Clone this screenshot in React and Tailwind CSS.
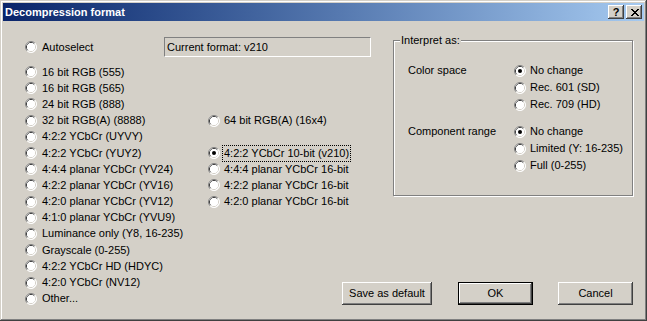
const RadioDot = ({ checked }) => (
  <svg width="12" height="12" viewBox="0 0 12 12" className="shrink-0">
    <circle cx="6" cy="6" r="5.5" fill="#ffffff" />
    <path d="M2.11 9.89 A5.5 5.5 0 0 1 9.89 2.11" stroke="#808080" fill="none" />
    <path d="M9.89 2.11 A5.5 5.5 0 0 1 2.11 9.89" stroke="#ffffff" fill="none" />
    <path d="M2.82 9.18 A4.5 4.5 0 0 1 9.18 2.82" stroke="#404040" fill="none" />
    <path d="M9.18 2.82 A4.5 4.5 0 0 1 2.82 9.18" stroke="#d4d0c8" fill="none" />
    <circle cx="6" cy="6" r="4" fill="#ffffff" />
    {checked && <circle cx="6" cy="6" r="2" fill="#000000" />}
  </svg>
);

const Radio = ({ label, checked, focused, className = "h-[16.2px]", gap = "mr-[5px]" }) => (
  <div className={`flex items-center whitespace-nowrap ${className}`}>
    <span className={gap}>
      <RadioDot checked={checked} />
    </span>
    <span
      className={
        focused ? "leading-[13px] outline outline-1 outline-dotted outline-black outline-offset-1" : "leading-[13px]"
      }
    >
      {label}
    </span>
  </div>
);

const raised =
  "shadow-[inset_-1px_-1px_#404040,inset_1px_1px_#ffffff,inset_-2px_-2px_#808080,inset_2px_2px_#d4d0c8]";

const leftFormats = [
  "16 bit RGB (555)",
  "16 bit RGB (565)",
  "24 bit RGB (888)",
  "32 bit RGB(A) (8888)",
  "4:2:2 YCbCr (UYVY)",
  "4:2:2 YCbCr (YUY2)",
  "4:4:4 planar YCbCr (YV24)",
  "4:2:2 planar YCbCr (YV16)",
  "4:2:0 planar YCbCr (YV12)",
  "4:1:0 planar YCbCr (YVU9)",
  "Luminance only (Y8, 16-235)",
  "Grayscale (0-255)",
  "4:2:2 YCbCr HD (HDYC)",
  "4:2:0 YCbCr (NV12)",
  "Other...",
];

const deepFormats = ["4:4:4 planar YCbCr 16-bit", "4:2:2 planar YCbCr 16-bit", "4:2:0 planar YCbCr 16-bit"];

const CloseGlyph = () => (
  <svg width="8" height="7" viewBox="0 0 8 7" shapeRendering="crispEdges">
    <path
      d="M0 0h2v1h-2zM6 0h2v1h-2zM1 1h2v1h-2zM5 1h2v1h-2zM2 2h4v1h-4zM3 3h2v1h-2zM2 4h4v1h-4zM1 5h2v1h-2zM5 5h2v1h-2zM0 6h2v1h-2zM6 6h2v1h-2z"
      fill="#000000"
    />
  </svg>
);

const App = () => {
  return (
    <div
      className={`h-[321px] w-[647px] bg-[#d4d0c8] p-[3px] font-['Liberation_Sans',Arial,sans-serif] text-[11px] text-black shadow-[inset_-1px_-1px_#404040,inset_1px_1px_#d4d0c8,inset_-2px_-2px_#808080,inset_2px_2px_#ffffff]`}
    >
      {/* title bar */}
      <div className="flex h-[18px] items-center bg-gradient-to-r from-[#0a246a] to-[#a6caf0] pl-[2px] pr-[2px]">
        <span className="font-bold leading-[13px] text-white">Decompression format</span>
        <div className="ml-auto flex gap-[2px]">
          <div className={`flex h-[14px] w-[16px] items-center justify-center bg-[#d4d0c8] ${raised}`}>
            <span className="text-[11px] font-bold leading-[11px]">?</span>
          </div>
          <div className={`flex h-[14px] w-[16px] items-center justify-center bg-[#d4d0c8] pl-[1px] ${raised}`}>
            <CloseGlyph />
          </div>
        </div>
      </div>

      {/* body */}
      <div className="grid h-[297px] grid-cols-[183px_185px_240px] grid-rows-[auto_auto_1fr] pl-[22px] pt-[16px]">
        <div className="col-span-2 col-start-1 row-start-1 mb-[7px] flex items-center">
          <div className="w-[139px]">
            <Radio label="Autoselect" className="h-[16px]" />
          </div>
          <div className="flex h-[20px] w-[207px] items-center border border-t-[#808080] border-l-[#808080] border-b-white border-r-white pl-[2px] leading-[13px]">
            Current format: v210
          </div>
        </div>

        <div className="col-start-1 row-span-2 row-start-2 flex flex-col">
          {leftFormats.map((f) => (
            <Radio key={f} label={f} />
          ))}
        </div>

        <div className="col-start-2 row-start-2 flex flex-col pt-[48.6px]">
          <Radio label="64 bit RGB(A) (16x4)" gap="mr-[4px]" />
          <div className="h-[16.2px]" />
          <Radio label="4:2:2 YCbCr 10-bit (v210)" checked focused gap="mr-[4px]" />
          {deepFormats.map((f) => (
            <Radio key={f} label={f} gap="mr-[4px]" />
          ))}
        </div>

        <div className="relative col-start-3 row-span-2 row-start-1 mt-[3px] h-[156px] self-start border border-[#808080] pl-[14px] pt-[21px] shadow-[inset_1px_1px_#ffffff,1px_1px_#ffffff]">
          <span className="absolute left-[6px] top-[-7px] bg-[#d4d0c8] px-[1px] leading-[13px]">Interpret as:</span>
          <div className="flex">
            <div className="flex h-[17px] w-[106px] items-center leading-[13px]">Color space</div>
            <div className="flex flex-col">
              <Radio label="No change" checked className="h-[17px]" gap="mr-[4px]" />
              <Radio label="Rec. 601 (SD)" className="h-[17px]" gap="mr-[4px]" />
              <Radio label="Rec. 709 (HD)" className="h-[17px]" gap="mr-[4px]" />
            </div>
          </div>
          <div className="mt-[10px] flex">
            <div className="flex h-[17px] w-[106px] items-center leading-[13px]">Component range</div>
            <div className="flex flex-col">
              <Radio label="No change" checked className="h-[17px]" gap="mr-[4px]" />
              <Radio label="Limited (Y: 16-235)" className="h-[17px]" gap="mr-[4px]" />
              <Radio label="Full (0-255)" className="h-[17px]" gap="mr-[4px]" />
            </div>
          </div>
        </div>

        <div className="col-span-2 col-start-2 row-start-3 mb-[13px] flex self-end justify-self-end">
          <button className={`flex h-[23px] w-[90px] items-center justify-center bg-[#d4d0c8] leading-[13px] ${raised}`}>
            Save as default
          </button>
          <button className="ml-[26px] h-[23px] w-[75px] border border-black bg-[#d4d0c8]">
            <div className={`flex h-full w-full items-center justify-center leading-[13px] ${raised}`}>OK</div>
          </button>
          <button className={`ml-[25px] flex h-[23px] w-[75px] items-center justify-center bg-[#d4d0c8] leading-[13px] ${raised}`}>
            Cancel
          </button>
        </div>
      </div>
    </div>
  );
};

export default App;
